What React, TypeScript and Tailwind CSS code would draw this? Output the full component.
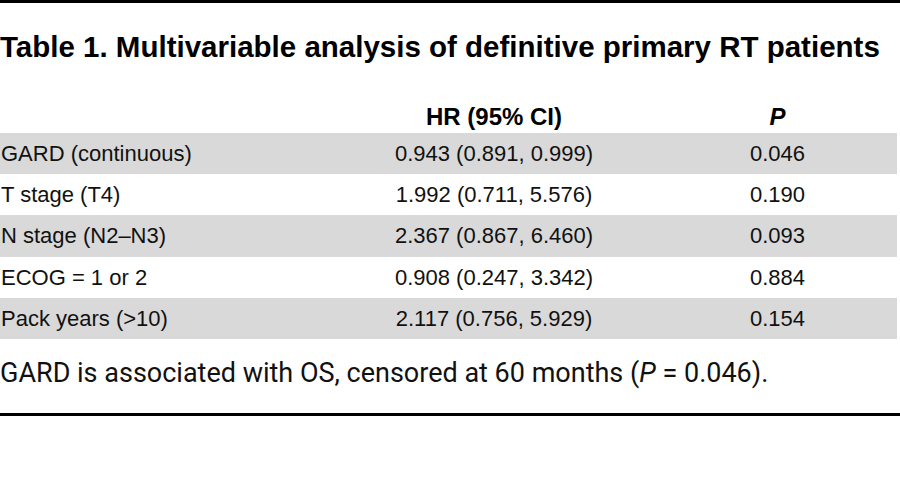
const rows = [
  { label: "GARD (continuous)", hr: "0.943 (0.891, 0.999)", p: "0.046" },
  { label: "T stage (T4)", hr: "1.992 (0.711, 5.576)", p: "0.190" },
  { label: "N stage (N2–N3)", hr: "2.367 (0.867, 6.460)", p: "0.093" },
  { label: "ECOG = 1 or 2", hr: "0.908 (0.247, 3.342)", p: "0.884" },
  { label: "Pack years (>10)", hr: "2.117 (0.756, 5.929)", p: "0.154" },
];

export default function App() {
  return (
    <div className="w-[900px] h-[489px] bg-white text-black font-['Liberation_Sans',sans-serif]">
      <div className="h-[3px] bg-black" />

      {/* Title */}
      <h1 className="mt-[26px] text-[29.5px] leading-[36px] font-bold text-black">
        Table 1. Multivariable analysis of definitive primary RT patients
      </h1>

      {/* Table */}
      <div className="w-[897px] mt-[37px]">
        <div className="grid grid-cols-[330px_328px_1fr] pb-[1px] text-[24px] leading-[30px] font-bold">
          <div />
          <div className="text-center">HR (95% CI)</div>
          <div className="text-center italic">P</div>
        </div>
        {rows.map((r, i) => (
          <div
            key={i}
            className={`grid grid-cols-[330px_328px_1fr] h-[41.2px] text-[22px] leading-[41px] text-[#111] ${
              i % 2 === 0 ? "bg-[#d9d9d9]" : "bg-white"
            }`}
          >
            <div className="pl-[1px]">{r.label}</div>
            <div className="text-center">{r.hr}</div>
            <div className="text-center">{r.p}</div>
          </div>
        ))}
      </div>

      {/* Footnote */}
      <p className="mt-[17px] text-[27px] leading-[34px] text-[#111] font-['Roboto',sans-serif]">
        GARD is associated with OS, censored at 60 months (<span className="italic">P</span> = 0.046).
      </p>

      <div className="mt-[23px] h-[3px] bg-black" />
    </div>
  );
}
